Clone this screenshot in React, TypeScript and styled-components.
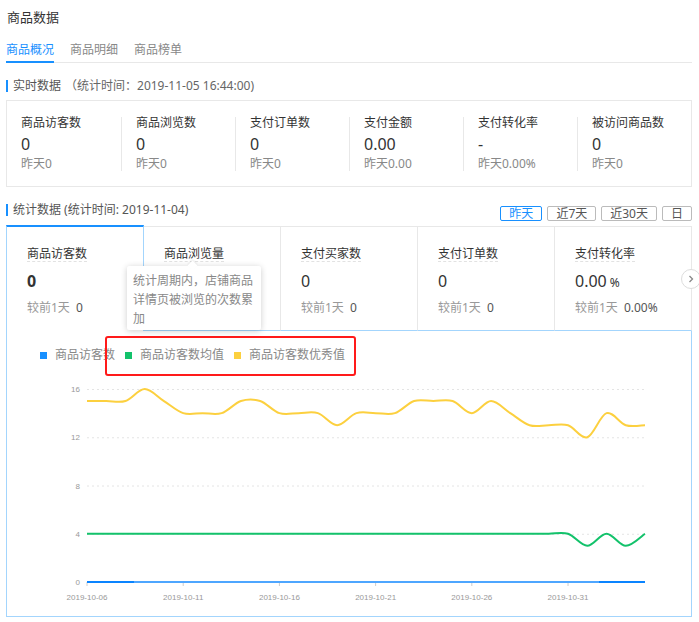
import React from 'react'
import styled, { createGlobalStyle } from 'styled-components'

const BLUE = '#1890ff'
const LIGHT_BLUE = '#a3d5fd'
const LINE = '#e8e8e8'

const realtime = [
  { label: '商品访客数', value: '0', prev: '昨天0' },
  { label: '商品浏览数', value: '0', prev: '昨天0' },
  { label: '支付订单数', value: '0', prev: '昨天0' },
  { label: '支付金额', value: '0.00', prev: '昨天0.00' },
  { label: '支付转化率', value: '-', prev: '昨天0.00%' },
  { label: '被访问商品数', value: '0', prev: '昨天0' },
]

const cards = [
  { label: '商品访客数', value: '0', diff: '0' },
  { label: '商品浏览量', value: '', diff: '' },
  { label: '支付买家数', value: '0', diff: '0' },
  { label: '支付订单数', value: '0', diff: '0' },
  { label: '支付转化率', value: '0.00', unit: '%', diff: '0.00%' },
]

const series = [
  { name: '商品访客数', color: '#1890ff' },
  { name: '商品访客数均值', color: '#13c26b' },
  { name: '商品访客数优秀值', color: '#fcd03f' },
]

const excellent = [15, 15, 15, 16, 15, 14, 14, 14, 15, 15, 14, 14, 14, 13, 14, 14, 14, 15, 15, 15, 14, 15, 14, 13, 13, 13, 12, 14, 13, 13]
const average = excellent.map((_, i) => (i < 26 ? 4 : i % 2 === 0 ? 3 : 4))

// chart geometry in page pixels
const X0 = 87
const X1 = 645
const Y0 = 583
const px = (i: number) => X0 + (i * (X1 - X0)) / 29
const py = (v: number) => Y0 - (v * 193) / 16

const smoothPath = (vals: number[]) => {
  const pts = vals.map((v, i) => [px(i), py(v)])
  let d = `M${pts[0][0]},${pts[0][1]}`
  for (let i = 0; i < pts.length - 1; i++) {
    const p0 = pts[i - 1] || pts[i]
    const p1 = pts[i]
    const p2 = pts[i + 1]
    const p3 = pts[i + 2] || p2
    const c1x = p1[0] + (p2[0] - p0[0]) / 6
    const c1y = p1[1] + (p2[1] - p0[1]) / 6
    const c2x = p2[0] - (p3[0] - p1[0]) / 6
    const c2y = p2[1] - (p3[1] - p1[1]) / 6
    d += ` C${c1x},${c1y} ${c2x},${c2y} ${p2[0]},${p2[1]}`
  }
  return d
}

const xLabels = ['2019-10-06', '2019-10-11', '2019-10-16', '2019-10-21', '2019-10-26', '2019-10-31']

const App = () => (
  <>
    <GlobalStyle />
    <Page>
      <Title>商品数据</Title>
      <TabBar>
        <Tab $active>商品概况</Tab>
        <Tab>商品明细</Tab>
        <Tab>商品榜单</Tab>
      </TabBar>

      <SectionHead>
        实时数据<Stamp>（统计时间：2019-11-05 16:44:00)</Stamp>
      </SectionHead>
      <RealtimeBox>
        {realtime.map((r) => (
          <RealtimeCol key={r.label}>
            <ColLabel>{r.label}</ColLabel>
            <ColValue>{r.value}</ColValue>
            <ColPrev>{r.prev}</ColPrev>
          </RealtimeCol>
        ))}
      </RealtimeBox>

      <StatsHead>
        <StatsTitle>统计数据 (统计时间: 2019-11-04)</StatsTitle>
        <RangeGroup>
          <RangeButton $active>昨天</RangeButton>
          <RangeButton>近7天</RangeButton>
          <RangeButton>近30天</RangeButton>
          <RangeButton>日</RangeButton>
        </RangeGroup>
      </StatsHead>

      <CardRow>
        {cards.map((c, i) => (
          <Card key={c.label} $active={i === 0}>
            <CardLabel>{c.label}</CardLabel>
            <CardValue $bold={i === 0}>
              {c.value}
              {c.unit && <Unit>{c.unit}</Unit>}
            </CardValue>
            {c.diff && (
              <Compare>
                较前1天<CompareValue>{c.diff}</CompareValue>
              </Compare>
            )}
          </Card>
        ))}
        <Tooltip>统计周期内，店铺商品详情页被浏览的次数累加</Tooltip>
        <NextButton>
          <svg width="8" height="8" viewBox="0 0 8 8">
            <path d="M2.5 1 L5.5 4 L2.5 7" fill="none" stroke="#888" strokeWidth="1.3" />
          </svg>
        </NextButton>
      </CardRow>

      <ChartPanel>
        <Legend>
          {series.map((s) => (
            <LegendItem key={s.name}>
              <Swatch $color={s.color} />
              {s.name}
            </LegendItem>
          ))}
        </Legend>
        <Highlight />
        <ChartSvg width="685" height="253">
          <g transform="translate(-7 -364)">
            {[16, 12, 8, 4].map((v) => (
              <line key={v} x1={X0} x2={X1} y1={py(v) + 0.5} y2={py(v) + 0.5} stroke="#e4e4e4" strokeDasharray="2 3" />
            ))}
            {[16, 12, 8, 4, 0].map((v) => (
              <text key={v} x={80} y={py(v) + 3} fontSize="8" fill="#999" textAnchor="end" fontFamily="Liberation Sans, sans-serif">
                {v}
              </text>
            ))}
            {xLabels.map((l, k) => (
              <g key={l}>
                <line x1={px(k * 5)} x2={px(k * 5)} y1={Y0} y2={Y0 + 4} stroke="#ccc" />
                <text x={px(k * 5)} y={601} fontSize="8" fill="#999" textAnchor="middle" fontFamily="Liberation Sans, sans-serif">
                  {l}
                </text>
              </g>
            ))}
            <path d={smoothPath(excellent)} fill="none" stroke="#fcd03f" strokeWidth="2" />
            <path d={smoothPath(average)} fill="none" stroke="#13c26b" strokeWidth="2" />
            <line x1={X0} x2={X1} y1={Y0} y2={Y0} stroke="#4ea6ff" strokeWidth="2" />
            <line x1={X0} x2={134} y1={Y0} y2={Y0} stroke="#0a84ff" strokeWidth="2" />
            <line x1={599} x2={X1} y1={Y0} y2={Y0} stroke="#0a84ff" strokeWidth="2" />
          </g>
        </ChartSvg>
      </ChartPanel>
    </Page>
  </>
)

export default App

const GlobalStyle = createGlobalStyle`
  html, body {
    margin: 0;
    padding: 0;
    background: #fff;
    overflow: hidden;
  }
  body {
    font-family: "Noto Sans", "Noto Sans CJK SC", sans-serif;
    color: #333;
  }
`

const Page = styled.div`
  width: 699px;
  box-sizing: border-box;
  padding: 0 7px 0 6px;
`

const Title = styled.div`
  height: 34px;
  line-height: 34px;
  font-size: 13px;
  color: #333;
  padding-left: 1px;
`

const TabBar = styled.div`
  display: flex;
  gap: 16px;
  border-bottom: 1px solid ${LINE};
`

const Tab = styled.div<{ $active?: boolean }>`
  font-size: 12px;
  line-height: 23px;
  padding-top: 4px;
  margin-bottom: -1px;
  border-bottom: 2px solid ${({ $active }) => ($active ? BLUE : 'transparent')};
  color: ${({ $active }) => ($active ? BLUE : '#888')};
`

const SectionHead = styled.div`
  margin-top: 17px;
  height: 12px;
  line-height: 12px;
  font-size: 12px;
  color: #555;
  border-left: 2px solid ${BLUE};
  padding-left: 5px;
  display: flex;
  align-items: center;
`

const Stamp = styled.span`
  margin-left: 4px;
  color: #666;
`

const RealtimeBox = styled.div`
  margin-top: 8px;
  border: 1px solid ${LINE};
  display: grid;
  grid-template-columns: repeat(6, 1fr);
  padding: 16px 0 15px;
`

const RealtimeCol = styled.div`
  padding-left: 14px;
  border-left: 1px solid ${LINE};
  &:first-child {
    border-left: none;
  }
`

const ColLabel = styled.div`
  font-size: 12px;
  line-height: 12px;
  color: #333;
`

const ColValue = styled.div`
  margin-top: 6px;
  font-size: 16px;
  line-height: 18px;
  color: #333;
`

const ColPrev = styled.div`
  margin-top: 4px;
  font-size: 12px;
  line-height: 14px;
  color: #888;
`

const StatsHead = styled.div`
  margin-top: 12px;
  height: 24px;
  display: flex;
  justify-content: space-between;
`

const StatsTitle = styled.div`
  margin-top: 5px;
  height: 12px;
  line-height: 12px;
  font-size: 12px;
  color: #555;
  border-left: 2px solid ${BLUE};
  padding-left: 5px;
`

const RangeGroup = styled.div`
  display: flex;
  gap: 5px;
  align-self: flex-end;
  margin-bottom: 2px;
`

const RangeButton = styled.div<{ $active?: boolean }>`
  height: 15px;
  line-height: 13px;
  box-sizing: border-box;
  padding: 0 8px;
  font-size: 12px;
  border-radius: 2px;
  border: 1px solid ${({ $active }) => ($active ? BLUE : '#bbb')};
  color: ${({ $active }) => ($active ? BLUE : '#555')};
`

const CardRow = styled.div`
  margin-top: 2px;
  height: 106px;
  display: flex;
  position: relative;
`

const Card = styled.div<{ $active?: boolean }>`
  flex: 1 1 0;
  box-sizing: border-box;
  padding: 14px 0 0 20px;
  ${({ $active }) =>
    $active
      ? `
    border-top: 2px solid ${BLUE};
    border-left: 1px solid ${LIGHT_BLUE};
    border-right: 1px solid ${LIGHT_BLUE};
  `
      : `
    margin-top: 1px;
    border-top: 1px solid ${LINE};
    border-right: 1px solid ${LINE};
    border-bottom: 1px solid ${LIGHT_BLUE};
  `}
`

const CardLabel = styled.span`
  display: inline-block;
  font-size: 12px;
  line-height: 15px;
  color: #333;
  border-bottom: 1px dashed #e2e2e2;
`

const CardValue = styled.div<{ $bold?: boolean }>`
  margin-top: 7px;
  height: 22px;
  line-height: 22px;
  font-size: 16px;
  color: #333;
  font-weight: ${({ $bold }) => ($bold ? 700 : 400)};
`

const Unit = styled.span`
  font-size: 12px;
  margin-left: 3px;
`

const Compare = styled.div`
  margin-top: 8px;
  line-height: 16px;
  font-size: 12px;
  color: #999;
`

const CompareValue = styled.span`
  margin-left: 6px;
  color: #555;
`

const Tooltip = styled.div`
  position: absolute;
  left: 121px;
  top: 41px;
  width: 134px;
  box-sizing: border-box;
  padding: 5px 6px 2px;
  font-size: 12px;
  line-height: 19px;
  color: #888;
  background: #fff;
  border-radius: 2px;
  box-shadow: 0 1px 6px rgba(0, 0, 0, 0.2);
  z-index: 2;

  &::before {
    content: '';
    position: absolute;
    left: 62px;
    top: -4px;
    width: 7px;
    height: 7px;
    background: #fff;
    transform: rotate(45deg);
    box-shadow: -1px -1px 2px rgba(0, 0, 0, 0.08);
  }
`

const NextButton = styled.div`
  position: absolute;
  left: 675px;
  top: 44px;
  width: 20px;
  height: 20px;
  box-sizing: border-box;
  border-radius: 50%;
  border: 1px solid #ddd;
  background: #fff;
  display: flex;
  align-items: center;
  justify-content: center;
`

const ChartPanel = styled.div`
  position: relative;
  height: 286px;
  box-sizing: border-box;
  border: 1px solid ${LIGHT_BLUE};
  border-top: none;
`

const Legend = styled.div`
  display: flex;
  gap: 10px;
  padding: 16px 0 0 33px;
  height: 16px;
`

const LegendItem = styled.div`
  display: flex;
  align-items: center;
  font-size: 12px;
  line-height: 16px;
  color: #888;
`

const Swatch = styled.span<{ $color: string }>`
  width: 7px;
  height: 7px;
  margin-right: 8px;
  background: ${({ $color }) => $color};
`

const Highlight = styled.div`
  position: absolute;
  left: 98px;
  top: 5px;
  width: 251px;
  height: 40px;
  box-sizing: border-box;
  border: 2px solid #ff1a1a;
  border-radius: 3px;
`

const ChartSvg = styled.svg`
  display: block;
`
